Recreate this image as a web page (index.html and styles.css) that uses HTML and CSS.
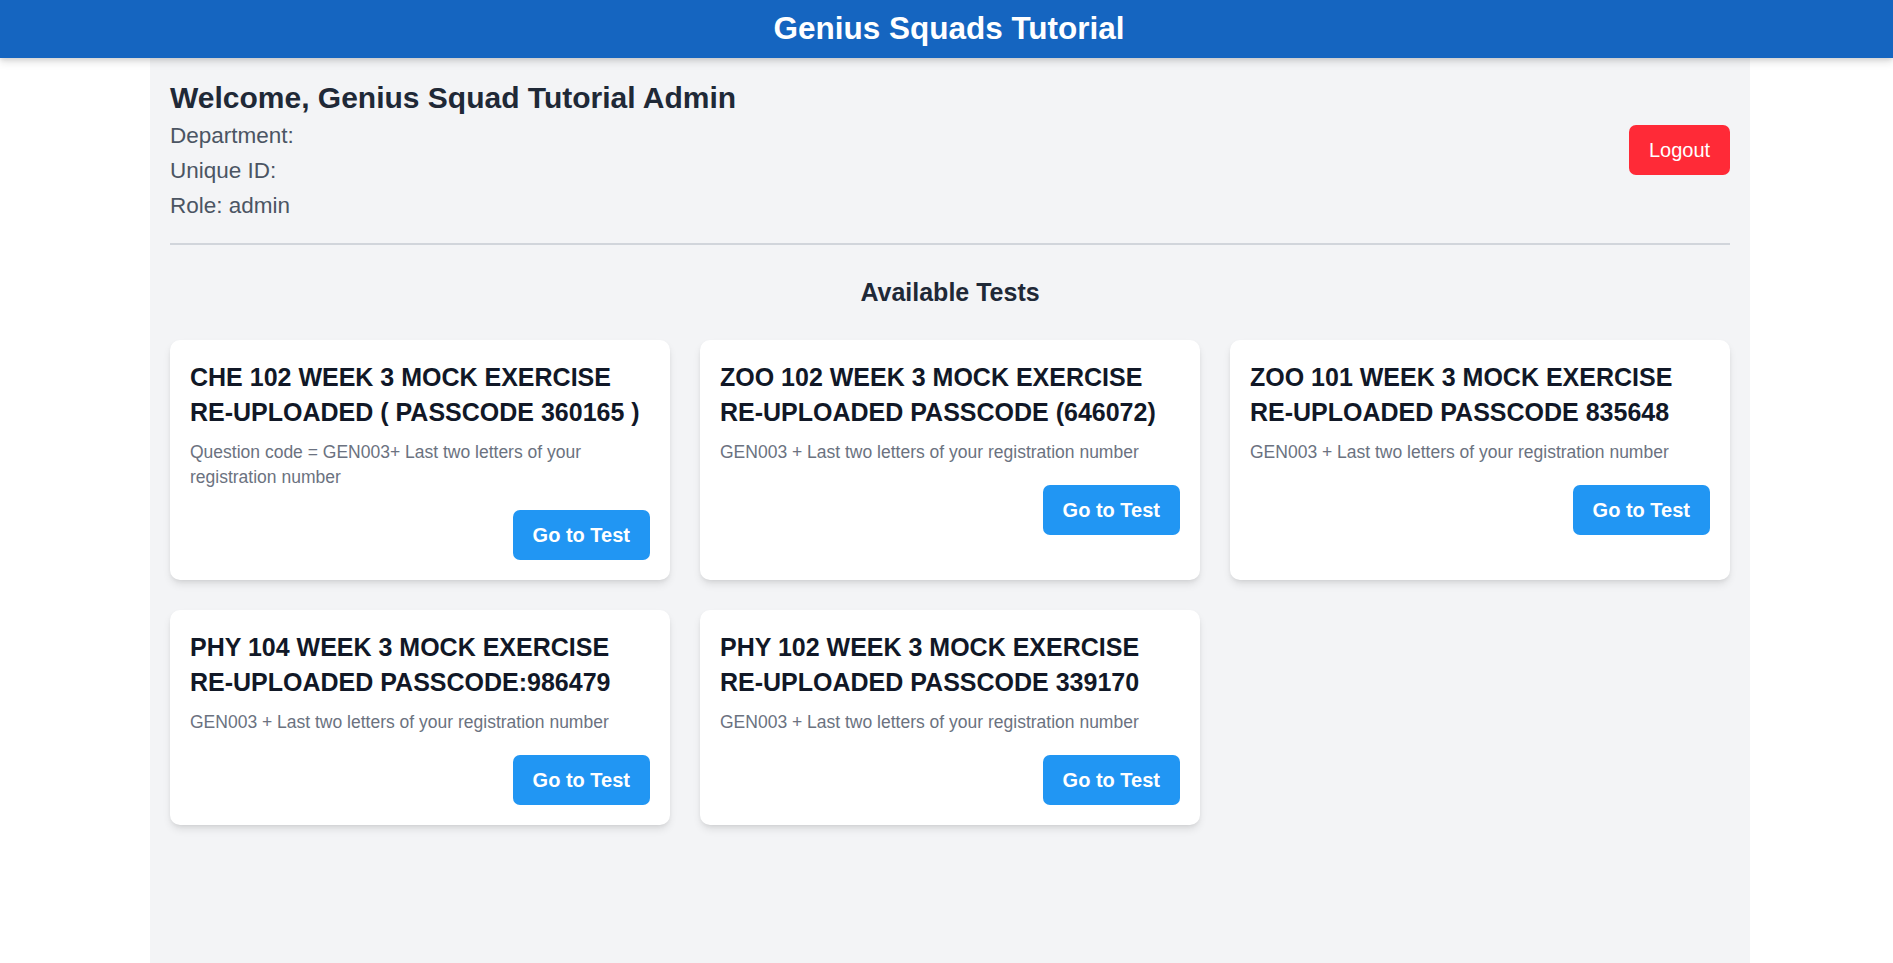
FILE: index.html
```html
<!DOCTYPE html>
<html lang="en">
<head>
<meta charset="utf-8">
<title>Genius Squads Tutorial</title>
<link rel="stylesheet" href="styles.css">
</head>
<body>
<header class="topbar">
  <h1 class="brand">Genius Squads Tutorial</h1>
</header>
<main class="page">
  <section class="profile">
    <div class="profile-info">
      <h2 class="welcome">Welcome, Genius Squad Tutorial Admin</h2>
      <p class="meta">Department: </p>
      <p class="meta">Unique ID: </p>
      <p class="meta">Role: admin</p>
    </div>
    <button class="btn-logout">Logout</button>
  </section>
  <hr class="divider">
  <h3 class="section-title">Available Tests</h3>
  <div class="tests">
    <div class="card">
      <h4 class="card-title">CHE 102 WEEK 3 MOCK EXERCISE RE-UPLOADED ( PASSCODE 360165 )</h4>
      <p class="card-desc">Question code = GEN003+ Last two letters of your registration number</p>
      <div class="card-actions"><button class="btn-test">Go to Test</button></div>
    </div>
    <div class="card">
      <h4 class="card-title">ZOO 102 WEEK 3 MOCK EXERCISE RE-UPLOADED PASSCODE (646072)</h4>
      <p class="card-desc">GEN003 + Last two letters of your registration number</p>
      <div class="card-actions"><button class="btn-test">Go to Test</button></div>
    </div>
    <div class="card">
      <h4 class="card-title">ZOO 101 WEEK 3 MOCK EXERCISE RE-UPLOADED PASSCODE 835648</h4>
      <p class="card-desc">GEN003 + Last two letters of your registration number</p>
      <div class="card-actions"><button class="btn-test">Go to Test</button></div>
    </div>
    <div class="card">
      <h4 class="card-title">PHY 104 WEEK 3 MOCK EXERCISE RE-UPLOADED PASSCODE:986479</h4>
      <p class="card-desc">GEN003 + Last two letters of your registration number</p>
      <div class="card-actions"><button class="btn-test">Go to Test</button></div>
    </div>
    <div class="card">
      <h4 class="card-title">PHY 102 WEEK 3 MOCK EXERCISE RE-UPLOADED PASSCODE 339170</h4>
      <p class="card-desc">GEN003 + Last two letters of your registration number</p>
      <div class="card-actions"><button class="btn-test">Go to Test</button></div>
    </div>
  </div>
</main>
</body>
</html>
```

FILE: styles.css
```css
* { box-sizing: border-box; }
html, body { margin: 0; padding: 0; }
body {
  font-family: "Liberation Sans", Arial, sans-serif;
  background: #ffffff;
  min-height: 100vh;
  display: flex;
  flex-direction: column;
}
.topbar {
  position: relative;
  z-index: 2;
  height: 58px;
  background: #1565c0;
  display: flex;
  align-items: center;
  justify-content: center;
  padding: 0 0 2px 5px;
  box-shadow: 0 4px 8px rgba(0,0,0,0.12), 0 2px 4px rgba(0,0,0,0.08);
}
.brand {
  margin: 0;
  color: #ffffff;
  font-size: 31.5px;
  font-weight: 700;
  line-height: 40px;
}
.page {
  flex: 1;
  width: 1600px;
  margin: 0 0 0 150px;
  background: #f3f4f6;
  padding: 20px;
}
.profile {
  display: flex;
  justify-content: space-between;
  align-items: center;
}
.welcome {
  margin: 0;
  font-size: 30px;
  line-height: 40px;
  font-weight: 700;
  color: #1f2937;
}
.meta {
  margin: 0;
  font-size: 22.5px;
  line-height: 35px;
  color: #4b5563;
}
.btn-logout {
  font-family: inherit;
  background: #ff2a37;
  color: #ffffff;
  border: none;
  border-radius: 7px;
  font-size: 20px;
  line-height: 30px;
  padding: 10px 20px;
  height: 50px;
  width: 101px;
  margin-bottom: 1px;
}
.divider {
  margin: 20px 0 0;
  border: none;
  border-top: 2px solid #d1d5db;
  height: 0;
}
.section-title {
  margin: 30px 0 30px;
  text-align: center;
  font-size: 25px;
  line-height: 35px;
  font-weight: 700;
  color: #1f2937;
}
.tests {
  display: grid;
  grid-template-columns: repeat(3, 1fr);
  gap: 30px;
}
.card {
  background: #ffffff;
  border-radius: 10px;
  padding: 20px;
  box-shadow: 0 5px 8px -1px rgba(0,0,0,0.1), 0 2px 5px -2px rgba(0,0,0,0.1);
}
.card-title {
  margin: 0;
  font-size: 25px;
  line-height: 35px;
  font-weight: 700;
  color: #111827;
}
.card-desc {
  margin: 10px 0 0;
  font-size: 17.5px;
  line-height: 25px;
  color: #6b7280;
}
.card-actions {
  margin-top: 20px;
  display: flex;
  justify-content: flex-end;
}
.btn-test {
  font-family: inherit;
  background: #2196f3;
  color: #ffffff;
  border: none;
  border-radius: 7px;
  font-size: 20px;
  font-weight: 700;
  line-height: 30px;
  height: 50px;
  padding: 10px 20px;
}
```
